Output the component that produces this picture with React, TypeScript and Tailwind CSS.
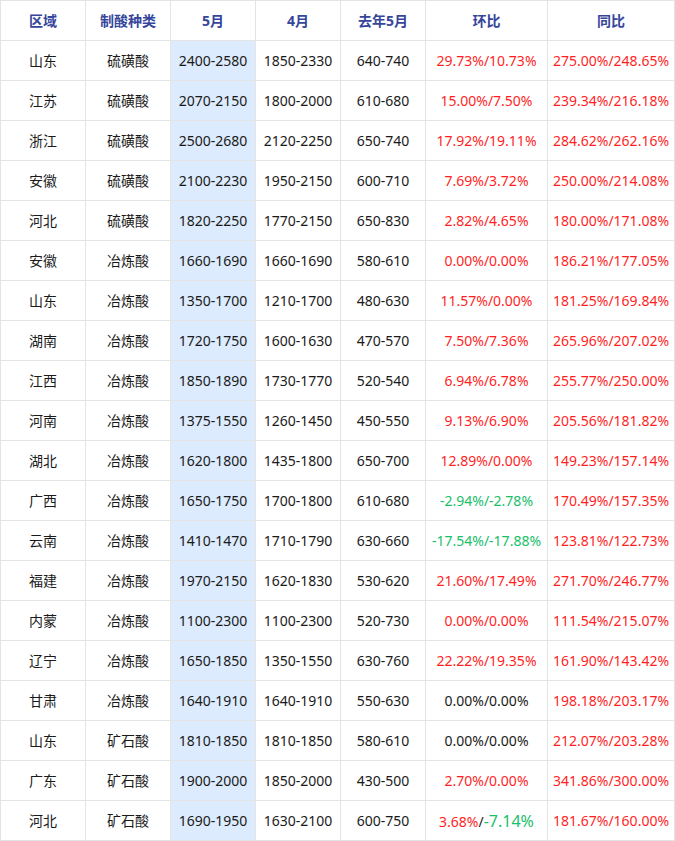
import React from "react";

type Row = {
  region: string;
  kind: string;
  may: string;
  apr: string;
  lastMay: string;
  mom: React.ReactNode;
  yoy: string;
};

const red = "text-[#ff1f1f]";
const green = "text-[#19c06a]";

const rows: Row[] = [
  { region: "山东", kind: "硫磺酸", may: "2400-2580", apr: "1850-2330", lastMay: "640-740", mom: <span className={red}>29.73%/10.73%</span>, yoy: "275.00%/248.65%" },
  { region: "江苏", kind: "硫磺酸", may: "2070-2150", apr: "1800-2000", lastMay: "610-680", mom: <span className={red}>15.00%/7.50%</span>, yoy: "239.34%/216.18%" },
  { region: "浙江", kind: "硫磺酸", may: "2500-2680", apr: "2120-2250", lastMay: "650-740", mom: <span className={red}>17.92%/19.11%</span>, yoy: "284.62%/262.16%" },
  { region: "安徽", kind: "硫磺酸", may: "2100-2230", apr: "1950-2150", lastMay: "600-710", mom: <span className={red}>7.69%/3.72%</span>, yoy: "250.00%/214.08%" },
  { region: "河北", kind: "硫磺酸", may: "1820-2250", apr: "1770-2150", lastMay: "650-830", mom: <span className={red}>2.82%/4.65%</span>, yoy: "180.00%/171.08%" },
  { region: "安徽", kind: "冶炼酸", may: "1660-1690", apr: "1660-1690", lastMay: "580-610", mom: <span className={red}>0.00%/0.00%</span>, yoy: "186.21%/177.05%" },
  { region: "山东", kind: "冶炼酸", may: "1350-1700", apr: "1210-1700", lastMay: "480-630", mom: <span className={red}>11.57%/0.00%</span>, yoy: "181.25%/169.84%" },
  { region: "湖南", kind: "冶炼酸", may: "1720-1750", apr: "1600-1630", lastMay: "470-570", mom: <span className={red}>7.50%/7.36%</span>, yoy: "265.96%/207.02%" },
  { region: "江西", kind: "冶炼酸", may: "1850-1890", apr: "1730-1770", lastMay: "520-540", mom: <span className={red}>6.94%/6.78%</span>, yoy: "255.77%/250.00%" },
  { region: "河南", kind: "冶炼酸", may: "1375-1550", apr: "1260-1450", lastMay: "450-550", mom: <span className={red}>9.13%/6.90%</span>, yoy: "205.56%/181.82%" },
  { region: "湖北", kind: "冶炼酸", may: "1620-1800", apr: "1435-1800", lastMay: "650-700", mom: <span className={red}>12.89%/0.00%</span>, yoy: "149.23%/157.14%" },
  { region: "广西", kind: "冶炼酸", may: "1650-1750", apr: "1700-1800", lastMay: "610-680", mom: <span className={green}>-2.94%/-2.78%</span>, yoy: "170.49%/157.35%" },
  { region: "云南", kind: "冶炼酸", may: "1410-1470", apr: "1710-1790", lastMay: "630-660", mom: <span className={green}>-17.54%/-17.88%</span>, yoy: "123.81%/122.73%" },
  { region: "福建", kind: "冶炼酸", may: "1970-2150", apr: "1620-1830", lastMay: "530-620", mom: <span className={red}>21.60%/17.49%</span>, yoy: "271.70%/246.77%" },
  { region: "内蒙", kind: "冶炼酸", may: "1100-2300", apr: "1100-2300", lastMay: "520-730", mom: <span className={red}>0.00%/0.00%</span>, yoy: "111.54%/215.07%" },
  { region: "辽宁", kind: "冶炼酸", may: "1650-1850", apr: "1350-1550", lastMay: "630-760", mom: <span className={red}>22.22%/19.35%</span>, yoy: "161.90%/143.42%" },
  { region: "甘肃", kind: "冶炼酸", may: "1640-1910", apr: "1640-1910", lastMay: "550-630", mom: <span className="text-[#1a1a1a]">0.00%/0.00%</span>, yoy: "198.18%/203.17%" },
  { region: "山东", kind: "矿石酸", may: "1810-1850", apr: "1810-1850", lastMay: "580-610", mom: <span className="text-[#1a1a1a]">0.00%/0.00%</span>, yoy: "212.07%/203.28%" },
  { region: "广东", kind: "矿石酸", may: "1900-2000", apr: "1850-2000", lastMay: "430-500", mom: <span className={red}>2.70%/0.00%</span>, yoy: "341.86%/300.00%" },
  {
    region: "河北",
    kind: "矿石酸",
    may: "1690-1950",
    apr: "1630-2100",
    lastMay: "600-750",
    mom: (
      <span>
        <span className={red}>3.68%</span>
        <span className="text-[#1a1a1a]">/</span>
        <span className={`${green} text-[16px]`}>-7.14%</span>
      </span>
    ),
    yoy: "181.67%/160.00%",
  },
];

const headers = ["区域", "制酸种类", "5月", "4月", "去年5月", "环比", "同比"];

const Cell = ({ children, className = "" }: { children: React.ReactNode; className?: string }) => (
  <div className={`flex items-center justify-center whitespace-nowrap ${className}`}>{children}</div>
);

const App = () => {
  return (
    <div
      className="w-[675px] bg-white text-[14px] text-[#1a1a1a]"
      style={{ fontFamily: '"Noto Sans", "Noto Sans CJK SC", sans-serif' }}
    >
      <div className="grid grid-cols-[84px_84px_84px_84px_84px_121px_126px] auto-rows-[39px] gap-px bg-[#e4e4e4] p-px">
        {headers.map((h) => (
          <Cell key={h} className="bg-white font-bold text-[#35469b]">
            {h}
          </Cell>
        ))}
        {rows.map((r, i) => (
          <React.Fragment key={i}>
            <Cell className="bg-white">{r.region}</Cell>
            <Cell className="bg-white">{r.kind}</Cell>
            <Cell className="bg-[#dcebfd]">{r.may}</Cell>
            <Cell className="bg-white">{r.apr}</Cell>
            <Cell className="bg-white">{r.lastMay}</Cell>
            <Cell className="bg-white">{r.mom}</Cell>
            <Cell className={`bg-white ${red}`}>{r.yoy}</Cell>
          </React.Fragment>
        ))}
      </div>
    </div>
  );
};

export default App;
